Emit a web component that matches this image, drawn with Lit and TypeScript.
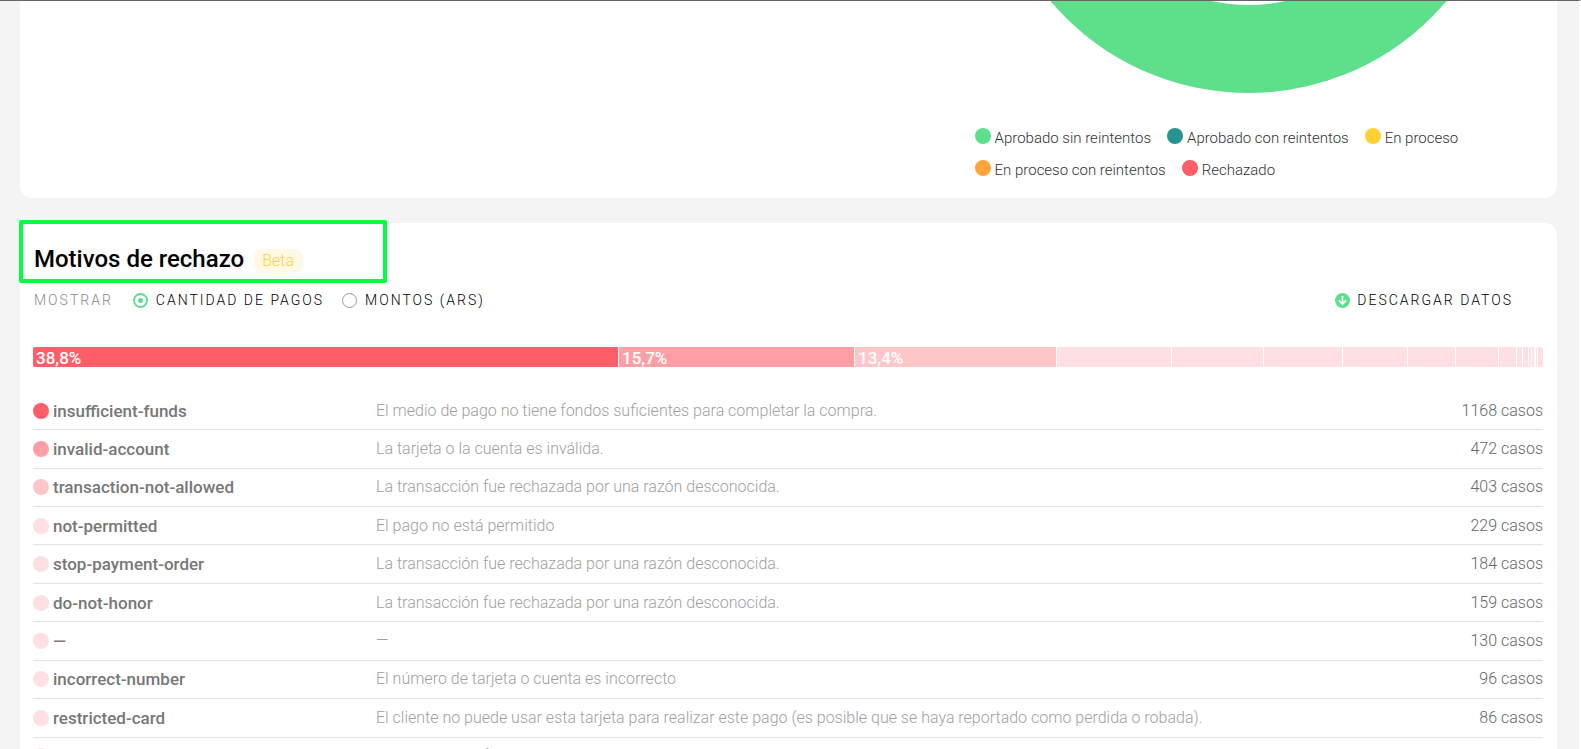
import { LitElement, html, css, svg } from "lit";
import { customElement, state } from "lit/decorators.js";

const REASONS = [
  { code: "insufficient-funds", text: "El medio de pago no tiene fondos suficientes para completar la compra.", count: 1168, tone: "t1" },
  { code: "invalid-account", text: "La tarjeta o la cuenta es inválida.", count: 472, tone: "t2" },
  { code: "transaction-not-allowed", text: "La transacción fue rechazada por una razón desconocida.", count: 403, tone: "t3" },
  { code: "not-permitted", text: "El pago no está permitido", count: 229, tone: "t4" },
  { code: "stop-payment-order", text: "La transacción fue rechazada por una razón desconocida.", count: 184, tone: "t4" },
  { code: "do-not-honor", text: "La transacción fue rechazada por una razón desconocida.", count: 159, tone: "t4" },
  { code: "—", text: "—", count: 130, tone: "t4" },
  { code: "incorrect-number", text: "El número de tarjeta o cuenta es incorrecto", count: 96, tone: "t4" },
  { code: "restricted-card", text: "El cliente no puede usar esta tarjeta para realizar este pago (es posible que se haya reportado como perdida o robada).", count: 86, tone: "t4" },
  { code: "contact-bank", text: "La transacción fue rechazada por una razón desconocida.", count: 34, tone: "t4" },
];

const SEGMENTS = [
  { share: 585, label: "38,8%", tone: "t1" },
  { share: 235, label: "15,7%", tone: "t2" },
  { share: 201, label: "13,4%", tone: "t3" },
  ...[114, 91, 78, 64, 47, 42, 17, 5, 5, 2, 2, 0, 1, 5].map((share) => ({ share, label: "", tone: "t4" })),
];

const LEGEND = [
  [["Aprobado sin reintentos", "green"], ["Aprobado con reintentos", "teal"], ["En proceso", "yellow"]],
  [["En proceso con reintentos", "orange"], ["Rechazado", "t1"]],
];

@customElement("app-root")
export class AppRoot extends LitElement {
  static styles = css`
    :host {
      display: block;
      height: 100vh;
      overflow: hidden;
      box-sizing: border-box;
      position: relative;
      background: #f4f4f4;
      border-top: 1px solid #666;
      border-right: 2px solid #fff;
      font-family: Roboto, "Liberation Sans", sans-serif;
      font-size: 16px;
      font-weight: 300;
      line-height: 24px;
      color: #333;
    }
    .page { padding: 0 22px 0 20px; display: flex; flex-direction: column; gap: 25px; }
    .card { background: #fff; }
    .chart-card {
      border-radius: 0 0 12px 12px;
      display: grid;
      grid-template-columns: 61% 1fr;
      padding-bottom: 8px;
    }
    .chart { grid-column: 2; padding-right: 24px; }
    .donut { display: block; width: 518px; height: 92px; margin-left: 32px; }
    .legend { margin: 33px 0 0; padding: 0 0 0 17px; }
    .legend-row { display: flex; gap: 16px; height: 32px; align-items: flex-start; font-size: 15px; }
    .legend-item { display: flex; gap: 4px; }
    .dot { flex: none; width: 16px; height: 16px; border-radius: 50%; }
    .legend-item .dot { margin-top: 2px; }
    .t1 { background: #ff5e69; }
    .t2 { background: #ff9fa5; }
    .t3 { background: #ffc6ca; }
    .t4 { background: #ffe0e2; }
    .green { background: #5edf8b; }
    .teal { background: #279492; }
    .yellow { background: #ffd133; }
    .orange { background: #ffa43b; }

    .reasons { border-radius: 12px 12px 0 0; padding: 20px 14px 0 13px; }
    .heading { display: flex; align-items: center; gap: 9px; padding-left: 1px; }
    .title { margin: 0; font-size: 24px; line-height: 32px; font-weight: 500; color: #000; }
    .badge { margin-top: 4px; padding: 0 9px; border-radius: 8px; background: #fff9e6; color: #ffd133; }
    .controls {
      display: flex;
      align-items: center;
      height: 24px;
      margin-top: 13px;
      padding: 0 30px 0 1px;
      font-size: 14px;
      letter-spacing: 2px;
      color: #000;
      text-transform: uppercase;
    }
    .group { display: flex; align-items: center; gap: 18px; }
    .caption { color: #888; margin-right: 2px; }
    .option { display: flex; align-items: center; gap: 8px; }
    .radio {
      appearance: none;
      box-sizing: border-box;
      width: 15px;
      height: 15px;
      margin: 0;
      border: 1px solid #999;
      border-radius: 50%;
    }
    .radio:checked { border: 2px solid #5edf8b; background: radial-gradient(circle, #5edf8b 2px, #fff 3px); }
    .download {
      margin-left: auto;
      display: flex;
      align-items: center;
      gap: 7px;
      padding: 0;
      border: 0;
      background: none;
      font: inherit;
      color: inherit;
      letter-spacing: inherit;
      text-transform: inherit;
      cursor: pointer;
    }
    .bar { display: flex; gap: 1px; height: 20px; margin-top: 35px; border-radius: 2px; overflow: hidden; }
    .segment { flex-basis: 0; min-width: 0; color: #fff; font-size: 17px; font-weight: 500; line-height: 22px; }
    .value { padding-left: 3px; }
    .table { width: 100%; height: 384px; margin-top: 25px; border-collapse: collapse; table-layout: fixed; }
    .cell { padding: 0; border-bottom: 1px solid #e2e2e2; text-align: left; white-space: nowrap; vertical-align: middle; }
    .code { width: 343px; font-size: 17px; font-weight: 500; color: #777; }
    .name { display: flex; align-items: center; gap: 4px; }
    .text { color: #a0a0a0; }
    .count { width: 120px; text-align: right; color: #666; }
    .marker {
      position: absolute;
      left: 19px;
      top: 219px;
      width: 360px;
      height: 55px;
      border: 4px solid #00ff40;
      border-radius: 2px;
      pointer-events: none;
    }
  `;

  @state() private mode = "count";

  private option(value: string, label: string) {
    return html`<label class="option">
      <input class="radio" type="radio" name="mode" .checked=${this.mode === value} @change=${() => (this.mode = value)} />
      <span>${label}</span>
    </label>`;
  }

  render() {
    return html`
      <main class="page">
        <section class="card chart-card">
          <div class="chart">
            <svg class="donut" viewBox="0 0 518 92" aria-hidden="true">
              ${svg`<circle cx="258.5" cy="-167" r="215" fill="none" stroke="#5edf8b" stroke-width="88" />`}
            </svg>
            <div class="legend">
              ${LEGEND.map(
                (row) => html`<div class="legend-row">
                  ${row.map(([label, tone]) => html`<span class="legend-item"><span class="dot ${tone}"></span><span>${label}</span></span>`)}
                </div>`
              )}
            </div>
          </div>
        </section>

        <section class="card reasons">
          <div class="heading">
            <h2 class="title">Motivos de rechazo</h2>
            <span class="badge">Beta</span>
          </div>
          <div class="controls">
            <div class="group" role="radiogroup" aria-labelledby="show">
              <span class="caption" id="show">Mostrar</span>
              ${this.option("count", "Cantidad de pagos")} ${this.option("amount", "Montos (ARS)")}
            </div>
            <button class="download" type="button">
              <svg width="15" height="15" viewBox="0 0 15 15" aria-hidden="true">
                <circle cx="7.5" cy="7.5" r="7.5" fill="#5edf8b" />
                <path d="M7.5 3v8M3.8 7.4l3.7 3.7 3.7-3.7" fill="none" stroke="#fff" stroke-width="1.7" />
              </svg>
              <span>Descargar datos</span>
            </button>
          </div>
          <div class="bar">
            ${SEGMENTS.map(
              (s) => html`<div class="segment ${s.tone}" style="flex-grow:${s.share}">
                ${s.label ? html`<span class="value">${s.label}</span>` : ""}
              </div>`
            )}
          </div>
          <table class="table">
            <tbody>
              ${REASONS.map(
                (r) => html`<tr>
                  <th class="cell code" scope="row">
                    <span class="name"><span class="dot ${r.tone}"></span><span>${r.code}</span></span>
                  </th>
                  <td class="cell text">${r.text}</td>
                  <td class="cell count">${r.count} casos</td>
                </tr>`
              )}
            </tbody>
          </table>
        </section>
      </main>
      <div class="marker"></div>
    `;
  }
}
